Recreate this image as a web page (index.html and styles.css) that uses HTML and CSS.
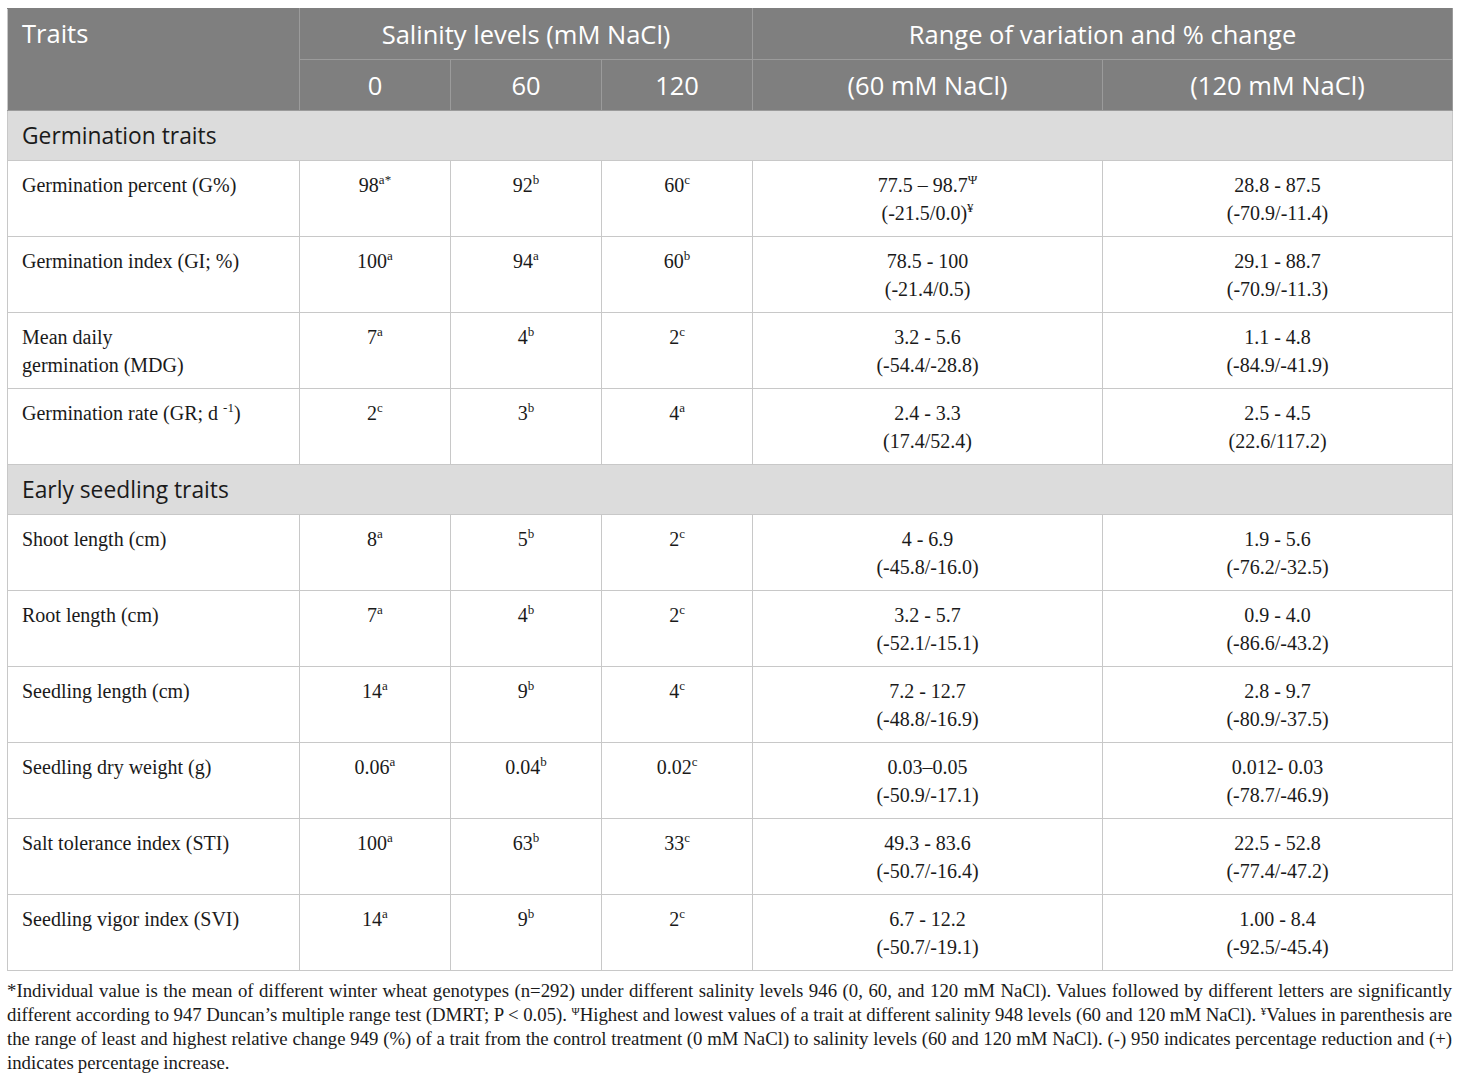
FILE: index.html
```html
<!DOCTYPE html>
<html>
<head>
<meta charset="utf-8">
<link rel="stylesheet" href="styles.css">
</head>
<body>
<div class="page">
<table class="data">
<colgroup>
<col class="c-trait"><col class="c-lvl"><col class="c-lvl"><col class="c-lvl"><col class="c-rng"><col class="c-rng">
</colgroup>
<thead>
<tr class="h1">
<th class="left" rowspan="2">Traits</th>
<th colspan="3">Salinity levels (mM NaCl)</th>
<th colspan="2">Range of variation and % change</th>
</tr>
<tr class="h2">
<th>0</th><th>60</th><th>120</th><th>(60 mM NaCl)</th><th>(120 mM NaCl)</th>
</tr>
</thead>
<tbody>
<tr class="sec"><td colspan="6">Germination traits</td></tr>
<tr><td class="left">Germination percent (G%)</td><td>98<sup>a*</sup></td><td>92<sup>b</sup></td><td>60<sup>c</sup></td><td>77.5 – 98.7<sup>Ψ</sup><br>(-21.5/0.0)<sup>¥</sup></td><td>28.8 - 87.5<br>(-70.9/-11.4)</td></tr>
<tr><td class="left">Germination index (GI; %)</td><td>100<sup>a</sup></td><td>94<sup>a</sup></td><td>60<sup>b</sup></td><td>78.5 - 100<br>(-21.4/0.5)</td><td>29.1 - 88.7<br>(-70.9/-11.3)</td></tr>
<tr><td class="left">Mean daily<br>germination (MDG)</td><td>7<sup>a</sup></td><td>4<sup>b</sup></td><td>2<sup>c</sup></td><td>3.2 - 5.6<br>(-54.4/-28.8)</td><td>1.1 - 4.8<br>(-84.9/-41.9)</td></tr>
<tr><td class="left">Germination rate (GR; d <sup>-1</sup>)</td><td>2<sup>c</sup></td><td>3<sup>b</sup></td><td>4<sup>a</sup></td><td>2.4 - 3.3<br>(17.4/52.4)</td><td>2.5 - 4.5<br>(22.6/117.2)</td></tr>
<tr class="sec"><td colspan="6">Early seedling traits</td></tr>
<tr><td class="left">Shoot length (cm)</td><td>8<sup>a</sup></td><td>5<sup>b</sup></td><td>2<sup>c</sup></td><td>4 - 6.9<br>(-45.8/-16.0)</td><td>1.9 - 5.6<br>(-76.2/-32.5)</td></tr>
<tr><td class="left">Root length (cm)</td><td>7<sup>a</sup></td><td>4<sup>b</sup></td><td>2<sup>c</sup></td><td>3.2 - 5.7<br>(-52.1/-15.1)</td><td>0.9 - 4.0<br>(-86.6/-43.2)</td></tr>
<tr><td class="left">Seedling length (cm)</td><td>14<sup>a</sup></td><td>9<sup>b</sup></td><td>4<sup>c</sup></td><td>7.2 - 12.7<br>(-48.8/-16.9)</td><td>2.8 - 9.7<br>(-80.9/-37.5)</td></tr>
<tr><td class="left">Seedling dry weight (g)</td><td>0.06<sup>a</sup></td><td>0.04<sup>b</sup></td><td>0.02<sup>c</sup></td><td>0.03–0.05<br>(-50.9/-17.1)</td><td>0.012- 0.03<br>(-78.7/-46.9)</td></tr>
<tr><td class="left">Salt tolerance index (STI)</td><td>100<sup>a</sup></td><td>63<sup>b</sup></td><td>33<sup>c</sup></td><td>49.3 - 83.6<br>(-50.7/-16.4)</td><td>22.5 - 52.8<br>(-77.4/-47.2)</td></tr>
<tr><td class="left">Seedling vigor index (SVI)</td><td>14<sup>a</sup></td><td>9<sup>b</sup></td><td>2<sup>c</sup></td><td>6.7 - 12.2<br>(-50.7/-19.1)</td><td>1.00 - 8.4<br>(-92.5/-45.4)</td></tr>
</tbody>
</table>
<p class="note">*Individual value is the mean of different winter wheat genotypes (n=292) under different salinity levels 946 (0, 60, and 120 mM NaCl). Values followed by different letters are significantly different according to 947 Duncan’s multiple range test (DMRT; P &lt; 0.05). <sup>Ψ</sup>Highest and lowest values of a trait at different salinity 948 levels (60 and 120 mM NaCl). <sup>¥</sup>Values in parenthesis are the range of least and highest relative change 949 (%) of a trait from the control treatment (0 mM NaCl) to salinity levels (60 and 120 mM NaCl). (-) 950 indicates percentage reduction and (+) indicates percentage increase.</p>
</div>
</body>
</html>
```

FILE: styles.css
```css
html, body {
  margin: 0;
  padding: 0;
  background: #ffffff;
}
.page {
  padding: 8px 8px 0 7px;
}
table.data {
  width: 1445px;
  table-layout: fixed;
  border-collapse: collapse;
  font-family: "Liberation Serif", "Times New Roman", serif;
  font-size: 20px;
  color: #1a1a1a;
}
.c-trait { width: 292px; }
.c-lvl { width: 151px; }
.c-rng { width: 350px; }
thead th {
  background: #7f7f7f;
  color: #ffffff;
  font-family: "Open Sans", "Noto Sans", sans-serif;
  font-weight: 400;
  font-size: 25.5px;
  text-align: center;
  vertical-align: middle;
  border: 1px solid #9b9b9b;
  padding: 0 14px;
  height: 50px;
  line-height: 30px;
}
thead th.left {
  text-align: left;
  vertical-align: top;
  padding-top: 9px;
}
thead tr.h1 th { border-top-color: #7f7f7f; }
thead tr.h1 th:first-child,
thead tr.h2 th:first-child { border-left-color: #c8c8c8; }
tbody td {
  border: 1px solid #c8c8c8;
  text-align: center;
  vertical-align: top;
  padding: 10px 14px 0;
  height: 65px;
  line-height: 28px;
}
tbody td.left { text-align: left; }
tr.sec td {
  background: #dcdcdc;
  font-family: "Open Sans", "Noto Sans", sans-serif;
  font-size: 22.8px;
  color: #1a1a1a;
  text-align: left;
  vertical-align: middle;
  padding: 0 14px;
  height: 49px;
  line-height: 30px;
}
sup {
  font-size: 13px;
  line-height: 0;
  vertical-align: 8px;
}
.note {
  margin: 8px 0 0 0;
  font-family: "Liberation Serif", "Times New Roman", serif;
  font-size: 18.8px;
  word-spacing: -0.6px;
  line-height: 24px;
  color: #1a1a1a;
  text-align: justify;
  width: 1445px;
}
.note sup {
  font-size: 11px;
  vertical-align: 6px;
}
```
